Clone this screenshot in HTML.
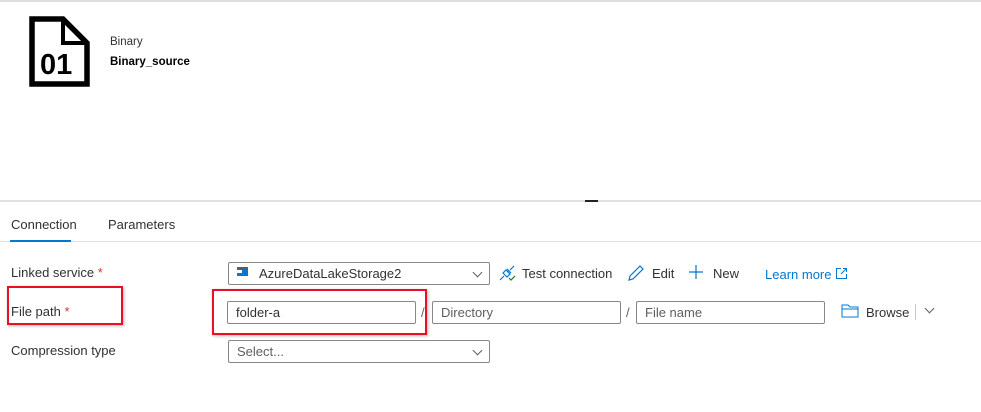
<!DOCTYPE html>
<html><head><style>
*{box-sizing:border-box;margin:0;padding:0}
body{width:981px;height:412px;background:#fff;font-family:"Liberation Sans",sans-serif;position:relative;overflow:hidden;color:#323130}
.a{position:absolute}
.t{font-size:13px;white-space:nowrap}
.in{position:absolute;border:1px solid #8a8886;border-radius:2px;height:23px;font-size:13px;padding:3px 8px;color:#605e5c;background:#fff}
.red{position:absolute;border:2px solid #e81123;box-shadow:1px 1px 3px rgba(0,0,0,.3)}
.chev{position:absolute;right:8px;top:8px;width:7px;height:7px;border-right:1px solid #605e5c;border-bottom:1px solid #605e5c;transform:rotate(45deg)}
</style></head><body>
<div class="a" style="left:0;top:0;width:981px;height:2px;background:#ddd"></div>
<svg class="a" style="left:29px;top:16px" width="62" height="72" viewBox="0 0 62 72"><path d="M3 3H34L58 27V68H3Z" fill="none" stroke="#000" stroke-width="5.5"/><path d="M34 3V27H58" fill="none" stroke="#000" stroke-width="4"/><text x="11" y="58" font-family="Liberation Sans" font-weight="bold" font-size="29">01</text></svg>
<div class="a t" style="left:110px;top:36px;font-size:11.5px">Binary</div>
<div class="a t" style="left:110px;top:56px;font-size:11.5px;font-weight:bold;color:#000">Binary_source</div>
<div class="a" style="left:0;top:200px;width:981px;height:2px;background:#e1e1e1"></div>
<div class="a" style="left:585px;top:200px;width:13px;height:2px;background:#222"></div>
<div class="a t" style="left:11px;top:217px;font-size:13px">Connection</div>
<div class="a t" style="left:108px;top:217px;font-size:13px">Parameters</div>
<div class="a" style="left:0;top:241px;width:981px;height:1px;background:#e1e1e1"></div>
<div class="a" style="left:10px;top:240px;width:61px;height:2px;background:#0078d4"></div>
<div class="a t" style="left:11px;top:265px">Linked service <span style="color:#d13438">*</span></div>
<div class="a t" style="left:11px;top:304px">File path <span style="color:#d13438">*</span></div>
<div class="a t" style="left:11px;top:343px">Compression type</div>
<div class="red" style="left:7px;top:286px;width:116px;height:39px"></div>
<div class="in" style="left:228px;top:262px;width:262px;color:#323130;padding-left:30px">AzureDataLakeStorage2<div class="chev" style="top:6px"></div></div>
<div class="a" style="left:237px;top:267px;width:11px;height:9px;background:#0078d4;border-top:3px solid #50606a"></div>
<div class="a" style="left:237px;top:270px;width:5px;height:3px;background:#fff"></div>
<svg class="a" style="left:498px;top:264px" width="18" height="18" viewBox="0 0 18 18" fill="none" stroke="#0078d4" stroke-width="1.2"><path d="M2 16L6 12M16 2L12 6M5 9l4 4 3-3-4-4z M9 5l4 4"/><path d="M11 14l2 2 4-4" stroke="#107c10"/></svg>
<div class="a t" style="left:522px;top:266px">Test connection</div>
<svg class="a" style="left:627px;top:264px" width="18" height="18" viewBox="0 0 18 18" fill="none" stroke="#0078d4" stroke-width="1.2"><path d="M2 16l1-4L13 2l3 3L6 15z"/></svg>
<div class="a t" style="left:652px;top:266px">Edit</div>
<svg class="a" style="left:688px;top:264px" width="16" height="16" viewBox="0 0 16 16" stroke="#0078d4" stroke-width="1.2"><path d="M8 1v14M1 8h14"/></svg>
<div class="a t" style="left:713px;top:266px">New</div>
<div class="a t" style="left:765px;top:267px;color:#0078d4">Learn more</div>
<svg class="a" style="left:835px;top:267px" width="13" height="13" viewBox="0 0 13 13" fill="none" stroke="#0078d4"><path d="M6 1.5H1.5v10h10V7M8 1.5h3.5V5M11.5 1.5L6 7"/></svg>
<div class="in" style="left:227px;top:301px;width:189px;color:#323130">folder-a</div>
<div class="a t" style="left:421px;top:305px;color:#605e5c">/</div>
<div class="in" style="left:432px;top:301px;width:189px">Directory</div>
<div class="a t" style="left:626px;top:305px;color:#605e5c">/</div>
<div class="in" style="left:636px;top:301px;width:189px">File name</div>
<div class="red" style="left:212px;top:289px;width:215px;height:46px"></div>
<svg class="a" style="left:841px;top:304px" width="18" height="14" viewBox="0 0 18 14" fill="none" stroke="#0078d4"><path d="M1 1h6l2 2h8v10H1zM1 5h16"/></svg>
<div class="a t" style="left:866px;top:305px">Browse</div>
<div class="a" style="left:915px;top:304px;width:1px;height:16px;background:#c8c6c4"></div>
<div class="a" style="left:926px;top:305px;width:7px;height:7px;border-right:1px solid #605e5c;border-bottom:1px solid #605e5c;transform:rotate(45deg)"></div>
<div class="in" style="left:228px;top:340px;width:262px">Select...<div class="chev" style="top:6px"></div></div>
</body></html>
